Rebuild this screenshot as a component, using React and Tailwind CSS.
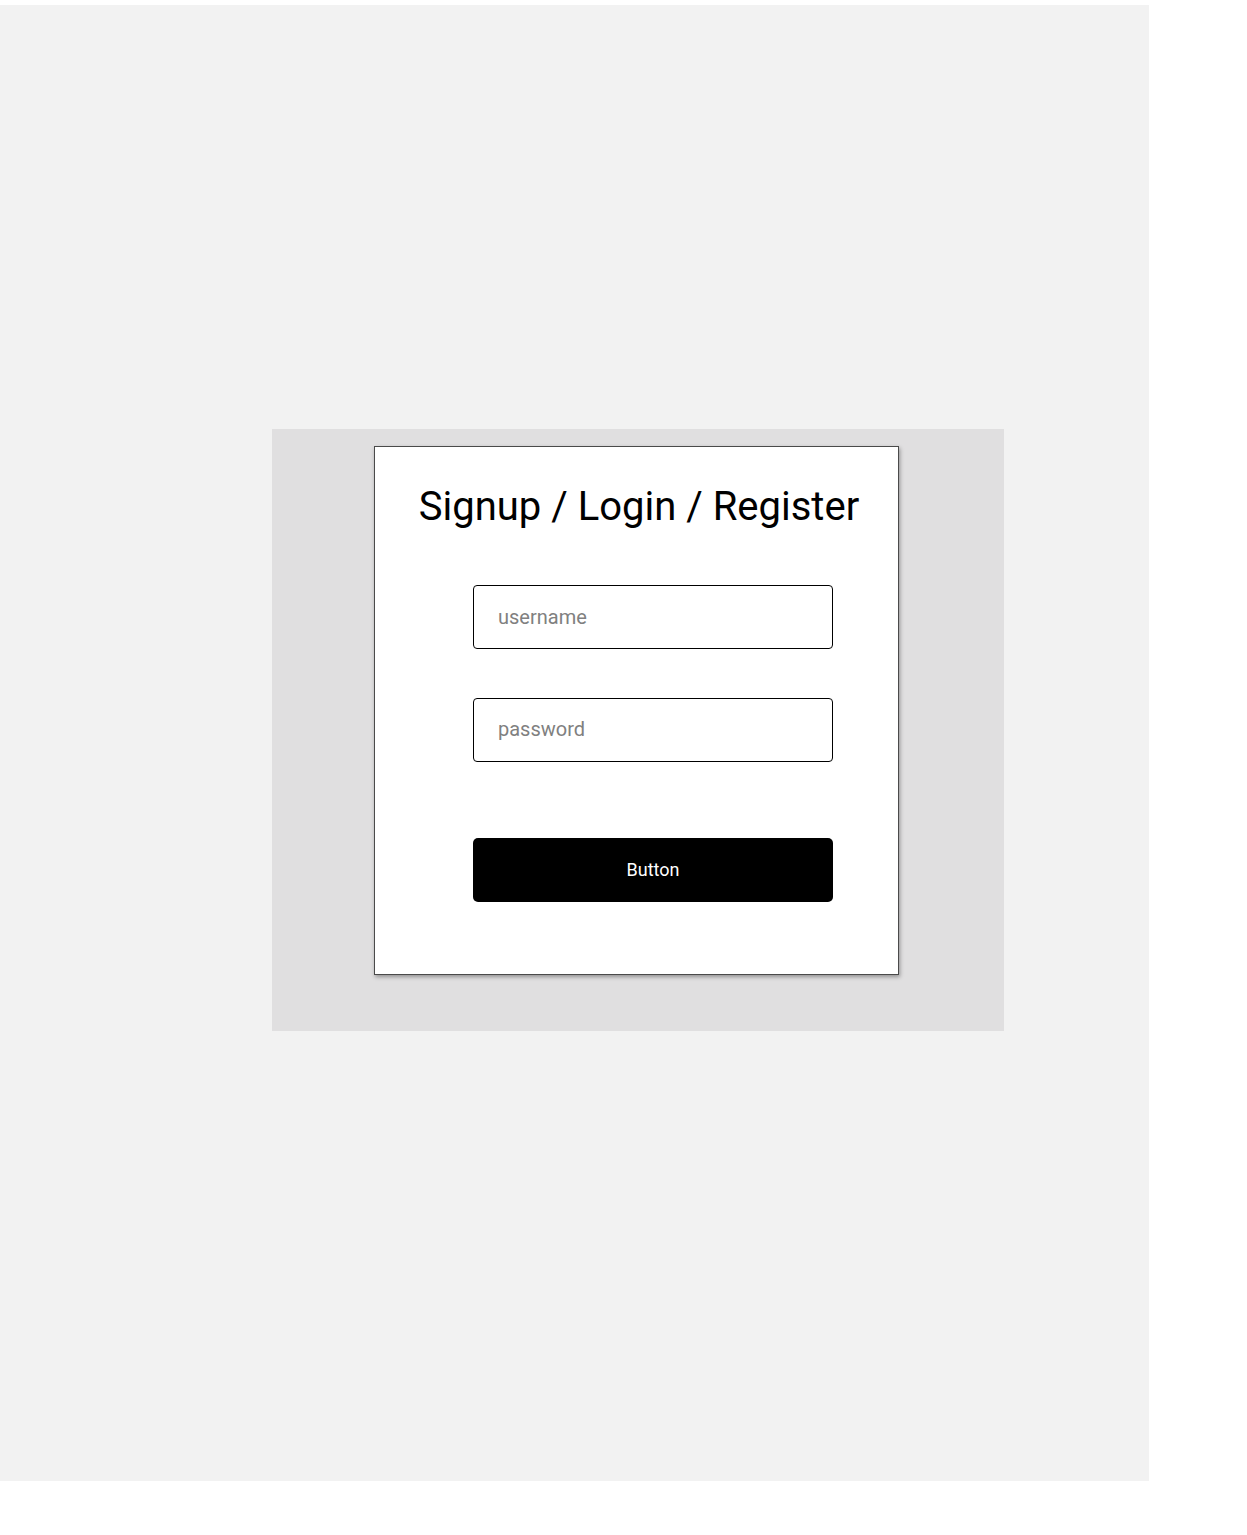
export default function App() {
  return (
    <div className="min-h-[1535px] w-[1247px] bg-white pt-[5px]" style={{ fontFamily: "Roboto, 'Liberation Sans', sans-serif" }}>
      <div className="w-[1149px] h-[1476px] bg-[#f2f2f2] pt-[424px] pl-[272px]">
        <div className="w-[732px] h-[602px] bg-[#e0dfe0] pt-[17px] pl-[102px]">
          <div className="w-[525px] h-[529px] bg-white border border-[#4a4a4a] shadow-[1px_2px_4px_rgba(0,0,0,0.35)] pt-[36px]">
            <h1 className="text-[40px] leading-[48px] text-black text-center pl-[5px]">
              Signup / Login / Register
            </h1>
            <div className="flex flex-col pl-[98px] pt-[54px]">
              <input
                type="text"
                placeholder="username"
                className="w-[360px] h-[64px] border border-black rounded-[4px] pl-[24px] text-[20px] text-black placeholder:text-[#808080] outline-none"
              />
              <input
                type="password"
                placeholder="password"
                className="mt-[49px] w-[360px] h-[64px] border border-black rounded-[4px] pl-[24px] pb-[2px] text-[20px] text-black placeholder:text-[#808080] outline-none"
              />
              <button className="mt-[76px] w-[360px] h-[64px] bg-black rounded-[5px] pb-[2px] text-white text-[18px]">
                Button
              </button>
            </div>
          </div>
        </div>
      </div>
    </div>
  );
}
